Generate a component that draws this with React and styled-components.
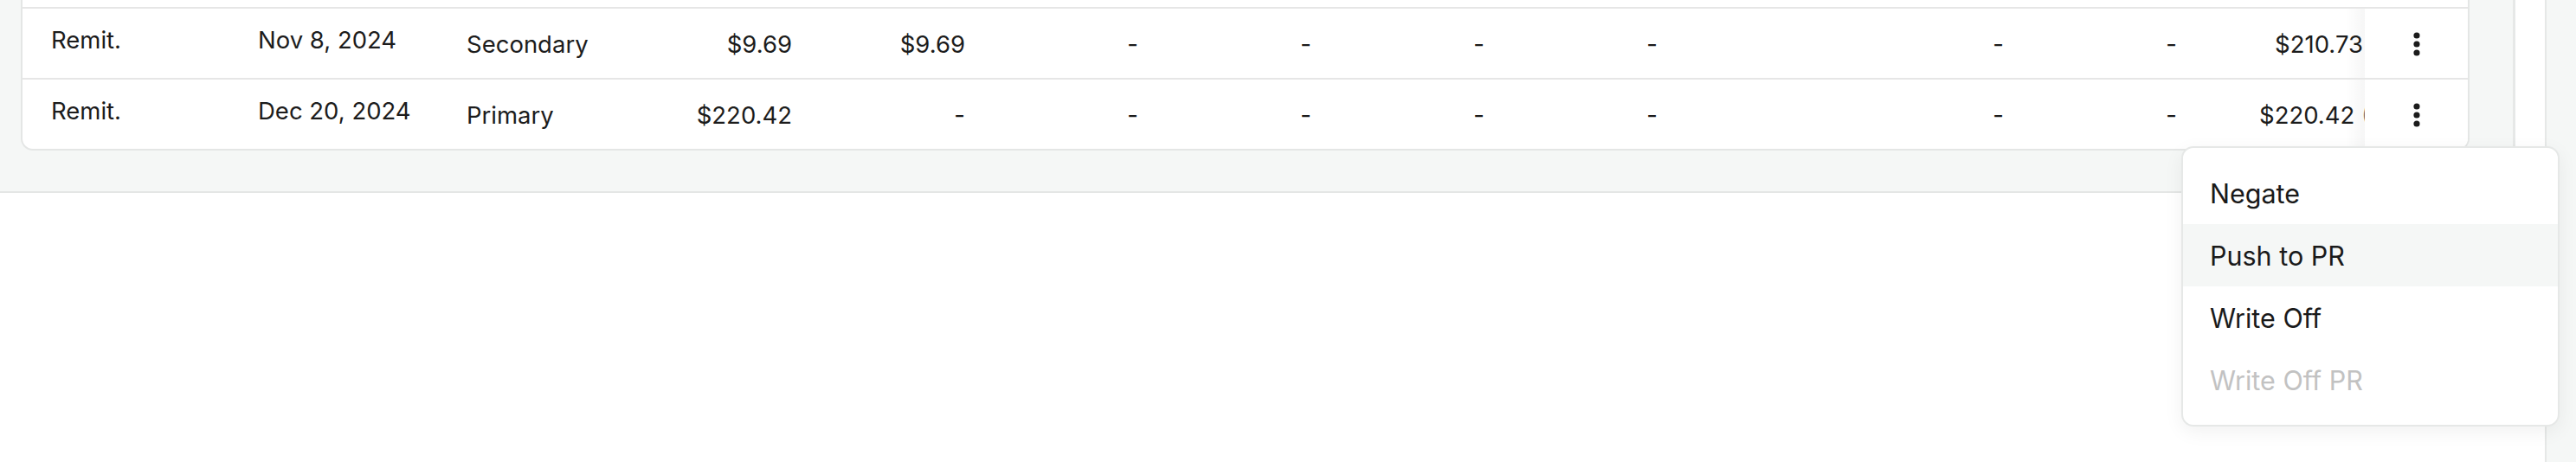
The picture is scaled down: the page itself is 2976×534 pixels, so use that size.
import React from "react";
import styled, { createGlobalStyle } from "styled-components";

const GlobalStyle = createGlobalStyle`
  html, body { margin: 0; padding: 0; background: #ffffff; }
  body { font-family: Inter, "Noto Sans", "Liberation Sans", sans-serif; color: #1c1c1c; }
  * { box-sizing: border-box; }
`;

const Page = styled.div`
  position: relative;
  display: flex;
  width: 2976px;
  height: 534px;
  overflow: hidden;
  background: #ffffff;
`;

const Main = styled.div`
  flex: 1;
  display: flex;
  flex-direction: column;
  min-width: 0;
`;

const Band = styled.div`
  display: flex;
  align-items: stretch;
  background: #f5f7f6;
  border-bottom: 2px solid #e4e6e5;
  height: 223px;
`;

const CardWrap = styled.div`
  padding: 0 50px 47px 24px;
`;

const Card = styled.div`
  width: 2829px;
  background: #ffffff;
  border: 2px solid #e4e6e5;
  border-top: none;
  border-radius: 0 0 14px 14px;
  overflow: hidden;
`;

const InnerTrack = styled.div`
  width: 37px;
  background: #ffffff;
  border-left: 3px solid #e6e8e7;
`;

const RowTail = styled.div`
  height: 10px;
  border-bottom: 2px solid #e6e6e6;
`;

const Row = styled.div`
  display: grid;
  grid-template-columns: 240px 241px 240px repeat(9, 200px) 185px 119px;
  height: ${(p) => (p.$last ? "80px" : "82px")};
  border-bottom: ${(p) => (p.$last ? "none" : "2px solid #e6e6e6")};
  align-items: center;
`;

const Cell = styled.div`
  font-size: 27.5px;
  line-height: 34px;
  white-space: nowrap;
  color: #1c1c1c;
  padding-left: ${(p) => (p.$first ? "33px" : "32px")};
  padding-bottom: ${(p) => (p.$raised ? "9px" : "0")};
  margin-top: ${(p) => (p.$raised ? "0" : "2px")};
`;

const NumCell = styled.div`
  font-size: 27.5px;
  line-height: 34px;
  white-space: nowrap;
  color: #1c1c1c;
  margin-top: 2px;
  text-align: ${(p) => (p.$lead ? "left" : "right")};
  padding-right: ${(p) => (p.$tight ? "2px" : "32px")};
  padding-left: ${(p) => (p.$lead ? "63px" : "0")};
`;

const Paren = styled.span`
  color: #6b6b6b;
`;

const ActionCell = styled.div`
  position: relative;
  z-index: 1;
  align-self: stretch;
  display: flex;
  align-items: center;
  justify-content: center;
  background: #ffffff;
  &::before {
    content: "";
    position: absolute;
    top: 0;
    bottom: 0;
    left: -22px;
    width: 22px;
    background: linear-gradient(to right, rgba(0, 0, 0, 0), rgba(0, 0, 0, 0.035));
  }
`;

const KebabButton = styled.button`
  border: none;
  background: transparent;
  padding: 0;
  width: 32px;
  height: 40px;
  display: flex;
  align-items: center;
  justify-content: center;
  margin-top: 2px;
`;

const Blank = styled.div`
  flex: 1;
  background: #ffffff;
`;

const PageTrack = styled.div`
  width: 36px;
  background: #f5f7f6;
  border-left: 2px solid #e6e8e7;
`;

const Menu = styled.div`
  position: absolute;
  left: 2520px;
  top: 169px;
  width: 437px;
  padding: 16px 0;
  background: #ffffff;
  border: 2px solid #e6e8e7;
  border-radius: 14px;
  box-shadow: 0 6px 22px rgba(0, 0, 0, 0.06);
  z-index: 5;
`;

const MenuItem = styled.div`
  height: 72px;
  display: flex;
  align-items: center;
  padding-left: 31px;
  font-size: 30.5px;
  color: ${(p) => (p.$disabled ? "#c2c2c2" : "#1a1a1a")};
  background: ${(p) => (p.$active ? "#f5f7f6" : "transparent")};
`;

const Kebab = () => (
  <svg width="8" height="28" viewBox="0 0 8 28">
    <circle cx="4" cy="4" r="3.6" fill="#1c1c1c" />
    <circle cx="4" cy="14" r="3.6" fill="#1c1c1c" />
    <circle cx="4" cy="24" r="3.6" fill="#1c1c1c" />
  </svg>
);

const rows = [
  {
    type: "Remit.",
    date: "Nov 8, 2024",
    payer: "Secondary",
    nums: ["$9.69", "$9.69", "-", "-", "-", "-", "", "-", "-"],
    total: "$210.73",
    note: null,
  },
  {
    type: "Remit.",
    date: "Dec 20, 2024",
    payer: "Primary",
    nums: ["$220.42", "-", "-", "-", "-", "-", "", "-", "-"],
    total: "$220.42",
    note: "($9.69)",
  },
];

const menuItems = [
  { label: "Negate" },
  { label: "Push to PR", active: true },
  { label: "Write Off" },
  { label: "Write Off PR", disabled: true },
];

export default function App() {
  return (
    <>
      <GlobalStyle />
      <Page>
        <Main>
          <Band>
            <CardWrap>
              <Card>
                <RowTail />
                {rows.map((r, i) => (
                  <Row key={i} $last={i === rows.length - 1}>
                    <Cell $first $raised>{r.type}</Cell>
                    <Cell $raised>{r.date}</Cell>
                    <Cell>{r.payer}</Cell>
                    {r.nums.map((n, j) => (
                      <NumCell key={j}>{n}</NumCell>
                    ))}
                    <NumCell $tight $lead={!!r.note}>
                      {r.total}
                      {r.note && <Paren> {r.note}</Paren>}
                    </NumCell>
                    <ActionCell>
                      <KebabButton aria-label="Row actions">
                        <Kebab />
                      </KebabButton>
                    </ActionCell>
                  </Row>
                ))}
              </Card>
            </CardWrap>
            <InnerTrack />
          </Band>
          <Blank />
        </Main>
        <PageTrack />
        <Menu>
          {menuItems.map((m) => (
            <MenuItem key={m.label} $active={m.active} $disabled={m.disabled}>
              {m.label}
            </MenuItem>
          ))}
        </Menu>
      </Page>
    </>
  );
}
